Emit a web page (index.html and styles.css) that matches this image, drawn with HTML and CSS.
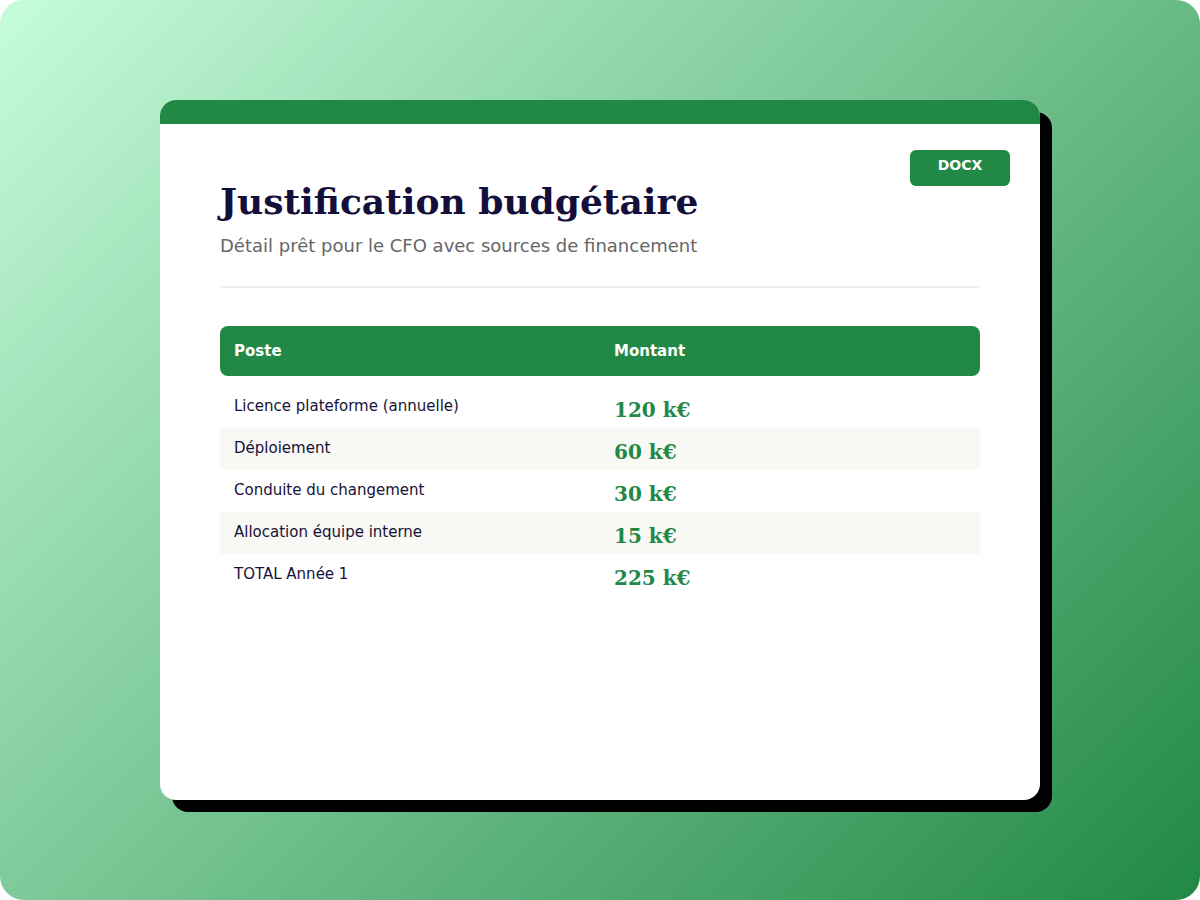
FILE: index.html
```html
<!DOCTYPE html>
<html lang="fr">
<head>
<meta charset="utf-8">
<title>Justification budgétaire</title>
<link rel="stylesheet" href="styles.css">
</head>
<body>
<div class="stage">
  <div class="card">
    <div class="card-bar"></div>
    <span class="badge">DOCX</span>
    <div class="card-body">
      <h1 class="title">Justification budgétaire</h1>
      <p class="subtitle">Détail prêt pour le CFO avec sources de financement</p>
      <hr class="divider">
      <div class="table">
        <div class="row head">
          <div class="cell">Poste</div>
          <div class="cell">Montant</div>
        </div>
        <div class="rows">
          <div class="row">
            <div class="cell label">Licence plateforme (annuelle)</div>
            <div class="cell amount">120 k€</div>
          </div>
          <div class="row alt">
            <div class="cell label">Déploiement</div>
            <div class="cell amount">60 k€</div>
          </div>
          <div class="row">
            <div class="cell label">Conduite du changement</div>
            <div class="cell amount">30 k€</div>
          </div>
          <div class="row alt">
            <div class="cell label">Allocation équipe interne</div>
            <div class="cell amount">15 k€</div>
          </div>
          <div class="row">
            <div class="cell label">TOTAL Année 1</div>
            <div class="cell amount">225 k€</div>
          </div>
        </div>
      </div>
    </div>
  </div>
</div>
</body>
</html>
```

FILE: styles.css
```css
html, body {
  margin: 0;
  padding: 0;
  background: #ffffff;
}

.stage {
  width: 1200px;
  height: 900px;
  border-radius: 24px;
  background: linear-gradient(135deg, #c6fcda 0%, #218845 100%);
  display: flex;
  align-items: center;
  justify-content: center;
  font-family: "DejaVu Sans", sans-serif;
}

.card {
  position: relative;
  width: 880px;
  height: 700px;
  background: #ffffff;
  border-radius: 16px;
  box-shadow: 12px 12px 0 #000000;
  overflow: hidden;
  box-sizing: border-box;
}

.card-bar {
  height: 24px;
  background: #218845;
}

.badge {
  position: absolute;
  top: 50px;
  right: 30px;
  width: 100px;
  height: 36px;
  box-sizing: border-box;
  padding-top: 7px;
  text-align: center;
  background: #218845;
  color: #ffffff;
  font-weight: bold;
  font-size: 14px;
  line-height: 17px;
  border-radius: 6px;
}

.card-body {
  padding: 56px 60px 0 60px;
}

.title {
  margin: 0;
  font-family: "DejaVu Serif", serif;
  font-weight: bold;
  font-size: 36px;
  line-height: 42px;
  color: #140f3a;
}

.subtitle {
  margin: 13px 0 0 0;
  font-size: 18px;
  line-height: 21px;
  color: #666666;
}

.divider {
  margin: 30px 0 0 0;
  border: 0;
  height: 2px;
  background: #eeeeee;
}

.table {
  margin-top: 38px;
}

.row {
  display: grid;
  grid-template-columns: 1fr 1fr;
}

.row.head {
  background: #218845;
  border-radius: 8px;
  color: #ffffff;
  font-weight: bold;
  font-size: 15px;
  line-height: 18px;
}

.row.head .cell {
  padding: 16px 14px;
}

.rows {
  margin-top: 10px;
}

.row.alt {
  background: #f8f8f4;
}

.cell {
  padding: 10px 14px;
}

.label {
  font-size: 15px;
  line-height: 18px;
  padding-top: 11px;
  color: #171238;
}

.amount {
  font-family: "DejaVu Serif", serif;
  font-weight: bold;
  font-size: 20px;
  line-height: 22px;
  color: #218845;
  padding-top: 13px;
  padding-bottom: 7px;
}
```
